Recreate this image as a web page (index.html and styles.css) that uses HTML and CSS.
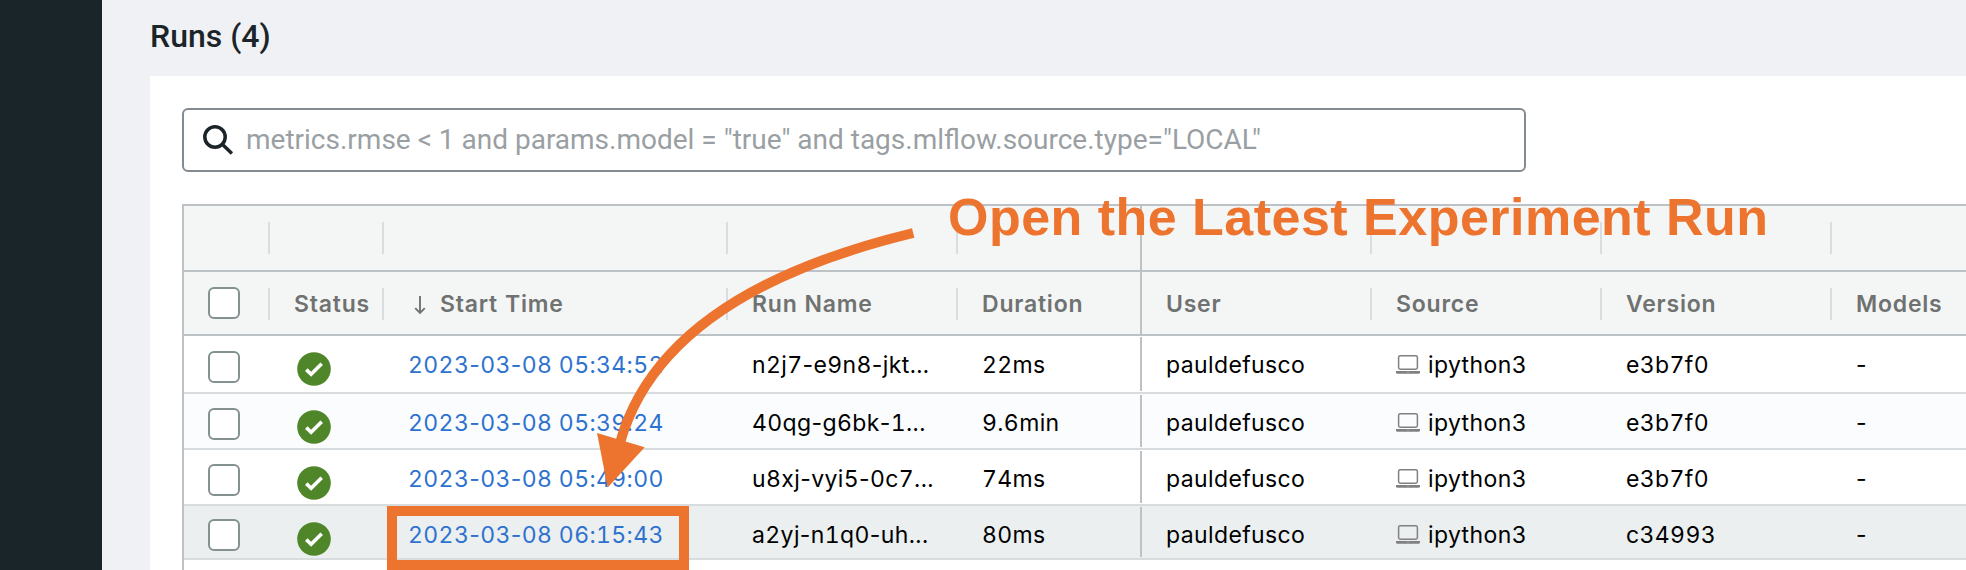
FILE: index.html
```
<!DOCTYPE html>
<html lang="en">
<head>
<meta charset="utf-8">
<title>Runs</title>
<link rel="stylesheet" href="styles.css">
</head>
<body>
<svg class="defs" aria-hidden="true">
  <symbol id="ok" viewBox="0 0 34 34"><circle cx="17" cy="17" r="16.8" fill="#4f8629"/><path d="M9.3 17.6l4.8 4.7 10.6-10.6" fill="none" stroke="#fff" stroke-width="3.6"/></symbol>
  <symbol id="laptop" viewBox="0 0 24 19"><rect x="2.6" y=".8" width="18.8" height="13.4" rx="1.6" fill="none" stroke="#808080" stroke-width="1.5"/><path d="M0 16h24v1.2q0 1.6-1.6 1.6H1.6Q0 18.800 0 17.200z" fill="#808080"/><path d="M11 17.200h2" stroke="#aaa" stroke-width="1"/></symbol>
</svg>
<div class="app">
  <nav class="sidebar"></nav>
  <main class="main">
    <h1 class="title">Runs (4)</h1>
    <section class="panel">
      <div class="search">
        <svg class="search-icon" viewBox="0 0 32 32"><circle cx="13" cy="13" r="10.200" fill="none" stroke="#1b2429" stroke-width="3.500"/><path d="M20.300 20.300l9.600 9.200" stroke="#1b2429" stroke-width="3.400"/></svg>
        <span class="placeholder">metrics.rmse &lt; 1 and params.model = "true" and tags.mlflow.source.type="LOCA<span class="tight">L</span>"</span>
      </div>
      <div class="table">
        <div class="row head group">
          <div class="cell"></div><div class="cell"></div><div class="cell"></div><div class="cell"></div><div class="cell pinned"></div><div class="cell"></div><div class="cell"></div><div class="cell"></div><div class="cell"></div>
        </div>
        <div class="row head">
          <div class="cell"><i class="box"></i></div>
          <div class="cell">Status</div>
          <div class="cell"><svg class="sort" viewBox="0 0 12 20"><path d="M6 1v16M1.200 13.200L6 18l4.800-4.800" fill="none" stroke="#6f7271" stroke-width="1.900"/></svg>Start Time</div>
          <div class="cell">Run Name</div>
          <div class="cell pinned">Duration</div>
          <div class="cell">User</div>
          <div class="cell">Source</div>
          <div class="cell">Version</div>
          <div class="cell">Models</div>
        </div>
        <div class="row r1">
          <div class="cell"><i class="box"></i></div>
          <div class="cell"><svg class="ok"><use href="#ok"/></svg></div>
          <div class="cell link"><span>2023<span class="h">-</span>03<span class="h">-</span>08 05:34:52</span></div>
          <div class="cell"><span>n2j7<span class="h">-</span>e9n8<span class="h">-</span>jkt...</span></div>
          <div class="cell pinned">22ms</div>
          <div class="cell">pauldefusco</div>
          <div class="cell"><svg class="laptop"><use href="#laptop"/></svg>ipython3</div>
          <div class="cell">e3b7f0</div>
          <div class="cell"><span class="h">-</span></div>
        </div>
        <div class="row r2">
          <div class="cell"><i class="box"></i></div>
          <div class="cell"><svg class="ok"><use href="#ok"/></svg></div>
          <div class="cell link"><span>2023<span class="h">-</span>03<span class="h">-</span>08 05:39:24</span></div>
          <div class="cell"><span>40qg<span class="h">-</span>g6bk<span class="h">-</span>1...</span></div>
          <div class="cell pinned">9.6min</div>
          <div class="cell">pauldefusco</div>
          <div class="cell"><svg class="laptop"><use href="#laptop"/></svg>ipython3</div>
          <div class="cell">e3b7f0</div>
          <div class="cell"><span class="h">-</span></div>
        </div>
        <div class="row r3">
          <div class="cell"><i class="box"></i></div>
          <div class="cell"><svg class="ok"><use href="#ok"/></svg></div>
          <div class="cell link"><span>2023<span class="h">-</span>03<span class="h">-</span>08 05:49:00</span></div>
          <div class="cell"><span>u8xj<span class="h">-</span>vyi5<span class="h">-</span>0c7...</span></div>
          <div class="cell pinned">74ms</div>
          <div class="cell">pauldefusco</div>
          <div class="cell"><svg class="laptop"><use href="#laptop"/></svg>ipython3</div>
          <div class="cell">e3b7f0</div>
          <div class="cell"><span class="h">-</span></div>
        </div>
        <div class="row r4">
          <div class="cell"><i class="box"></i></div>
          <div class="cell"><svg class="ok"><use href="#ok"/></svg></div>
          <div class="cell link"><span>2023<span class="h">-</span>03<span class="h">-</span>08 06:15:43</span></div>
          <div class="cell"><span>a2yj<span class="h">-</span>n1q0<span class="h">-</span>uh...</span></div>
          <div class="cell pinned">80ms</div>
          <div class="cell">pauldefusco</div>
          <div class="cell"><svg class="laptop"><use href="#laptop"/></svg>ipython3</div>
          <div class="cell">c34993</div>
          <div class="cell"><span class="h">-</span></div>
        </div>
      </div>
    </section>
  </main>
  <svg class="arrow" viewBox="0 0 1966 570"><path d="M913.200 233Q661.300 293.800 620 443" fill="none" stroke="#ed742f" stroke-width="10"/><path d="M597 433l47.700 14.300L607.700 487.500z" fill="#ed742f"/></svg>
  <div class="callout">Open the Latest Experiment Run</div>
  <div class="highlight"></div>
</div>
</body>
</html>
```
FILE: styles.css
```
* { box-sizing: border-box; }
body { margin: 0; overflow: hidden; }
.defs { display: none; }
.app { position: relative; display: flex; width: 1966px; height: 570px; overflow: hidden; background: #f0f1f4; }
.sidebar { flex: 0 0 102px; background: #1a2529; }
.main { flex: 1; min-width: 0; padding-left: 48px; }
.title { margin: 0; height: 76px; padding-top: 16px; font: 500 32px/40px Roboto, sans-serif; color: #1b2429; }
.panel { height: 494px; padding: 32px 0 0 32px; background: #fff; }
.search { display: flex; align-items: center; width: 1344px; height: 64px; padding-left: 18px; border: 2px solid #838b92; border-radius: 6px; }
.search-icon { width: 32px; height: 32px; }
.placeholder { margin-left: 12px; font: 400 28px/32px Roboto, sans-serif; color: #9a9fa3; white-space: nowrap; }
.tight { letter-spacing: -5px; }
.table { margin-top: 32px; height: 366px; border: 2px solid #bcc2c6; border-width: 2px 0 0 2px; font: 400 23px/30px Inter, sans-serif; font-variant-numeric: tabular-nums; letter-spacing: .38px; color: #000; }
.row { display: grid; grid-template-columns: 86px 114px 344px 230px 184px 230px 230px 230px 1fr; height: 56px; border-bottom: 2px solid #d9dcde; }
.cell { position: relative; display: flex; align-items: flex-start; padding: 14px 0 0 24px; white-space: nowrap; }
.h { font-variant-numeric: normal; }
.head { height: 64px; background: #f4f6f6; border-color: #bcc2c6; font-weight: 600; letter-spacing: .78px; color: #6f7271; }
.group { height: 66px; }
.head .cell { padding-top: 17px; }
.head .cell:not(:last-child)::after { content: ""; position: absolute; right: 0; top: 16px; width: 2px; height: 32px; background: #d9dce0; }
.head .pinned:not(:last-child)::after { top: 0; height: 100%; background: #bcc2c6; }
.pinned::after { content: ""; position: absolute; right: 0; top: 1px; bottom: 1px; width: 2px; background: #bcc2c6; }
.r1 { height: 58px; }
.r2 { background: #fbfcfe; }
.r4 { height: 54px; background: #ebeff0; }
.box { flex: none; width: 32px; height: 32px; border: 2px solid #839190; border-radius: 6px; background: #fff; }
.head .box { margin-top: -2px; }
.r1 .box { margin-top: 1px; }
.r4 .box { margin-top: -1px; }
.ok { width: 34px; height: 34px; margin: 2px 0 0 3px; }
.link { color: #2e72cf; }
.sort { width: 12px; height: 20px; margin: 6px 14px 0 6px; }
.laptop { width: 24px; height: 19px; margin: 5px 8px 0 0; }
.arrow { position: absolute; left: 0; top: 0; width: 1966px; height: 570px; }
.callout { position: absolute; left: 948px; top: 187px; font: 700 52px/60px "Liberation Sans", sans-serif; letter-spacing: .48px; color: #ed742f; white-space: nowrap; }
.highlight { position: absolute; left: 387px; top: 506px; width: 302px; height: 64px; border: 10px solid #ed742f; }
```
